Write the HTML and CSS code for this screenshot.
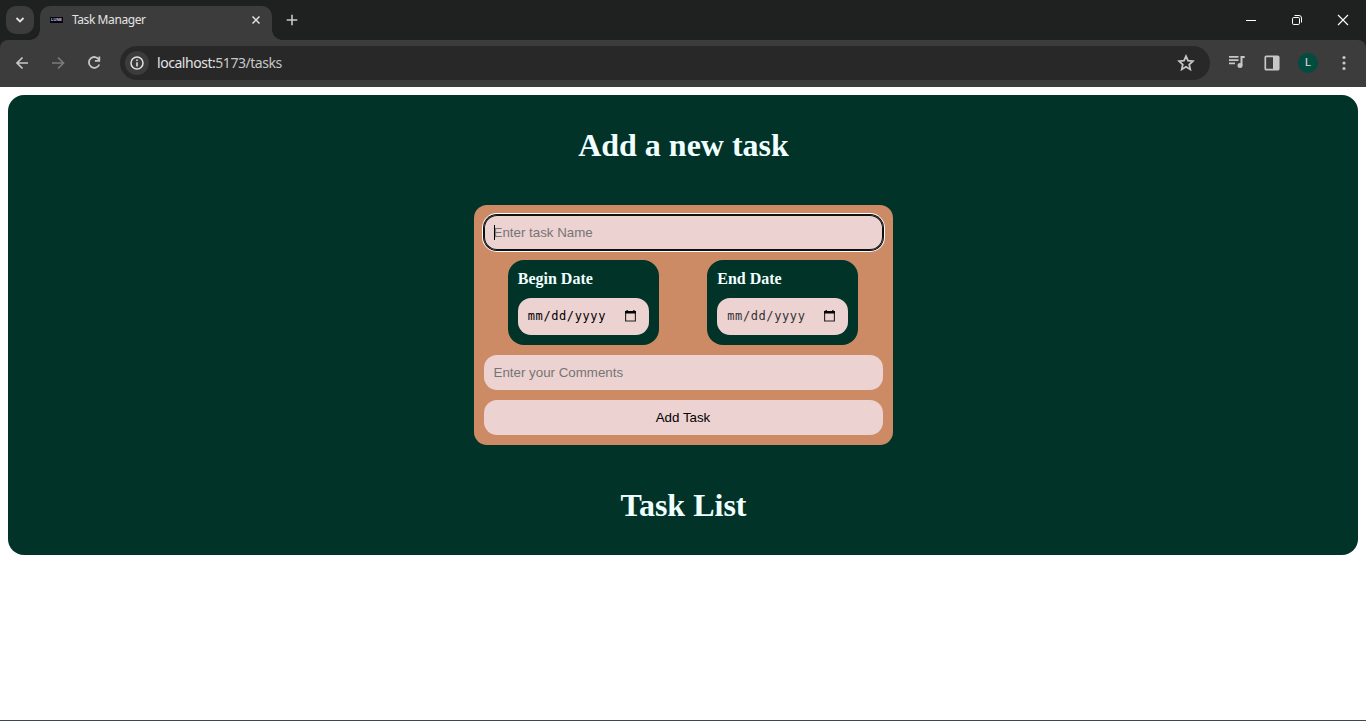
FILE: index.html
```html
<!DOCTYPE html>
<html lang="en">
<head>
<meta charset="utf-8">
<title>Task Manager</title>
<link rel="stylesheet" href="styles.css">
</head>
<body>
<header class="browser">
  <div class="tabstrip">
    <div class="tab-search"><svg width="10" height="6" viewBox="0 0 10 6"><path d="M1.500 1 5 4.500 8.500 1" fill="none" stroke="#e3e3e3" stroke-width="1.8"/></svg></div>
    <div class="tab">
      <span class="favicon">LUNE</span>
      <span class="tab-title">Task Manager</span>
      <svg class="tab-close" width="8" height="8" viewBox="0 0 8 8"><path d="M.5.5l7 7M7.500.5l-7 7" stroke="#e3e3e3" stroke-width="1.5"/></svg>
    </div>
    <svg class="new-tab" width="12" height="12" viewBox="0 0 12 12"><path d="M6 .7v10.600M.7 6h10.600" stroke="#c7c7c7" stroke-width="1.6"/></svg>
    <div class="window-controls">
      <svg width="46" height="40" viewBox="0 0 46 40"><path d="M18 20.500h10" stroke="#fff"/></svg>
      <svg width="46" height="40" viewBox="0 0 46 40" fill="none" stroke="#fff"><rect x="18.500" y="17.500" width="7" height="7" rx="1.3"/><path d="M20.500 15.500h4.500a2.500 2.500 0 0 1 2.500 2.500v4.500"/></svg>
      <svg width="46" height="40" viewBox="0 0 46 40"><path d="M18 15l10 10M28 15L18 25" stroke="#fff" stroke-width="1.1"/></svg>
    </div>
  </div>
  <div class="toolbar">
    <svg class="nav" viewBox="0 0 36 36"><path d="M28 18H17.500M22.500 12.500L17 18l5.500 5.500" fill="none" stroke="#c7c7c7" stroke-width="1.7"/></svg>
    <svg class="nav" viewBox="0 0 36 36"><path d="M16 18h11M22 12.500l5.500 5.500-5.500 5.500" fill="none" stroke="#7b7b7b" stroke-width="1.7"/></svg>
    <svg class="nav" viewBox="0 0 36 36"><path d="M27 14.700A5.400 5.400 0 1 0 27.300 19.500" fill="none" stroke="#c7c7c7" stroke-width="1.8"/><path d="M28.200 11.500v5.300h-5.300v-1.700h3.600v-3.600z" fill="#c7c7c7"/></svg>
    <div class="address">
      <div class="site-info"><svg width="14" height="14" viewBox="0 0 14 14"><circle cx="7" cy="7" r="6" fill="none" stroke="#e3e3e3" stroke-width="1.5"/><path d="M7 6.200v4.200M7 3.500v1.600" stroke="#e3e3e3" stroke-width="1.600"/></svg></div>
      <span class="url">localhost:<span class="url-path">5173/tasks</span></span>
      <svg class="star" width="24" height="24" viewBox="0 0 24 24"><path d="M12 5.200l2 4.500 4.900.5-3.700 3.300 1.100 4.900-4.300-2.600-4.300 2.600 1.100-4.900-3.700-3.300 4.900-.5z" fill="none" stroke="#c7c7c7" stroke-width="1.700"/></svg>
    </div>
    <div class="actions">
      <svg viewBox="0 0 36 36"><path d="M11 11.800h9.500M11 15.100h9.500M11 18.400h6" stroke="#c7c7c7" stroke-width="1.700"/><path d="M22.500 20.500V11h4.200v1.900h-2.200v7.600z" fill="#c7c7c7"/><circle cx="22" cy="20.600" r="2.500" fill="#c7c7c7"/></svg>
      <svg viewBox="0 0 36 36"><rect x="11.300" y="11.300" width="13.400" height="13.400" rx="1" fill="none" stroke="#c7c7c7" stroke-width="1.700"/><path d="M19 11h6v14h-6z" fill="#c7c7c7"/></svg>
      <div class="avatar-slot"><span class="avatar">L</span></div>
      <svg viewBox="0 0 36 36" fill="#c7c7c7"><circle cx="18" cy="12.500" r="1.600"/><circle cx="18" cy="18" r="1.600"/><circle cx="18" cy="23.500" r="1.600"/></svg>
    </div>
  </div>
</header>
<main class="page">
  <section class="panel">
    <h1 class="heading">Add a new task</h1>
    <form class="task-form">
      <div class="field focused"><span class="caret"></span>Enter task Name</div>
      <div class="dates">
        <div class="date-card">
          <span class="date-label">Begin Date</span>
          <div class="date-input"><span>mm/dd/yyyy</span><svg width="11" height="12" viewBox="0 0 11 12"><path d="M.6 2.500v8.500h9.800V2.500" fill="none" stroke="#222" stroke-width="1.100"/><path d="M0 1h11v2.500H0zM1.500 0h1.300v1H1.500zM8.200 0h1.300v1H8.200z"/></svg></div>
        </div>
        <div class="date-card">
          <span class="date-label">End Date</span>
          <div class="date-input muted"><span>mm/dd/yyyy</span><svg width="11" height="12" viewBox="0 0 11 12"><path d="M.6 2.500v8.500h9.800V2.500" fill="none" stroke="#222" stroke-width="1.100"/><path d="M0 1h11v2.500H0zM1.500 0h1.300v1H1.500zM8.200 0h1.300v1H8.200z"/></svg></div>
        </div>
      </div>
      <div class="field">Enter your Comments</div>
      <button class="submit" type="button">Add Task</button>
    </form>
    <h1 class="heading list-heading">Task List</h1>
  </section>
</main>
</body>
</html>
```
FILE: styles.css
```css
* { box-sizing: border-box; }
body {
  margin: 0;
  height: 721px;
  display: flex;
  flex-direction: column;
  overflow: hidden;
  background: #fff;
}
svg { display: block; flex: none; }
.browser { height: 87px; background: #1f2120; font-family: "Noto Sans", sans-serif; }
.tabstrip { height: 40px; display: flex; align-items: center; padding-left: 6px; }
.tab-search {
  width: 28px; height: 28px; border-radius: 10px; background: #3c3c3c;
  display: flex; align-items: center; justify-content: center;
}
.tab {
  position: relative;
  width: 232px; height: 34px; margin: 6px 0 0 6px; padding: 0 12px 6px 10px;
  display: flex; align-items: center;
  background: #3c3c3c; border-radius: 10px 10px 0 0;
}
.tab::before, .tab::after {
  content: ""; position: absolute; bottom: 0; width: 10px; height: 10px;
}
.tab::before { left: -10px; background: radial-gradient(circle at 0 0, transparent 9.500px, #3c3c3c 10px); }
.tab::after { right: -10px; background: radial-gradient(circle at 100% 0, transparent 9.500px, #3c3c3c 10px); }
.favicon {
  width: 13px; height: 6px; background: #050414; color: #c9c9d8;
  font: bold 4px/6px "Liberation Sans", sans-serif; text-align: center; overflow: hidden;
}
.tab-title { margin-left: 9px; font-size: 12px; line-height: 18px; letter-spacing: -.42px; color: #e3e3e3; white-space: nowrap; }
.tab-close { margin-left: auto; }
.new-tab { margin-left: 14px; }
.window-controls { display: flex; margin-left: auto; }
.toolbar {
  height: 47px; padding: 5px 4px 6px; display: flex; align-items: center;
  background: #3c3c3c; border-radius: 8px 8px 0 0;
}
.nav { width: 36px; height: 36px; }
.toolbar > .nav:first-child { margin-left: -4px; }
.address {
  flex: 1; height: 34px; margin-left: 12px; padding: 0 12px 0 5px;
  display: flex; align-items: center; border-radius: 17px; background: #282828;
}
.site-info {
  width: 24px; height: 24px; border-radius: 50%; background: #3c3c3c;
  display: flex; align-items: center; justify-content: center;
}
.url { margin-left: 8px; font-size: 14px; line-height: 20px; letter-spacing: -.46px; color: #e3e3e3; white-space: nowrap; }
.url-path { color: #c7c7c7; }
.star { margin-left: auto; }
.actions { display: flex; margin-left: 8px; }
.actions > * { width: 36px; height: 36px; }
.avatar-slot { display: flex; align-items: center; justify-content: center; }
.avatar {
  width: 20px; height: 20px; border-radius: 50%; background: #004d40; color: #e3e3e3;
  font: 11px/20px Roboto, sans-serif; text-align: center;
}
.page { flex: 1; padding: 8px; border-bottom: 1px solid #3d4658; }
.panel {
  height: 460px; padding-top: 31px; border-radius: 16px; background: #013328; color: azure;
  display: flex; flex-direction: column; align-items: center;
  font-family: "Liberation Serif", serif;
}
.heading { margin: 0; padding-left: 1px; font-size: 32px; line-height: 38px; font-weight: bold; white-space: nowrap; }
.task-form {
  width: 419px; height: 240px; margin-top: 41px; padding: 10px;
  display: flex; flex-direction: column; gap: 10px;
  border-radius: 13px; background: #cc8b65;
}
.field, .submit {
  height: 35px; flex: none; border-radius: 13px; background: #ecd2d1;
  font: 13.333px/35px "Liberation Sans", sans-serif;
}
.field { position: relative; padding-left: 10px; color: #757575; }
.focused { box-shadow: 0 0 0 1px #101010, 0 0 0 2px #fff, inset 0 0 0 1px #101010; }
.caret { position: absolute; left: 10px; top: 10px; width: 1px; height: 15px; background: #000; }
.submit { border: 0; padding: 0; color: #000; }
.dates { display: flex; justify-content: space-around; height: 85px; }
.date-card {
  width: 151px; height: 85px; padding: 10px; border-radius: 16px; background: #013328;
}
.date-label { display: block; height: 28px; font-size: 16px; line-height: 18px; font-weight: bold; }
.date-input {
  height: 37px; padding: 0 13px 0 10px; border-radius: 13px; background: #ecd2d1; color: #000;
  display: flex; align-items: center; justify-content: space-between;
  font: 12px/37px "DejaVu Sans Mono", monospace; letter-spacing: .6px;
}
.date-input svg { margin-bottom: 1px; }
.date-input.muted span { color: #333; }
.list-heading { margin-top: 41px; }
```
